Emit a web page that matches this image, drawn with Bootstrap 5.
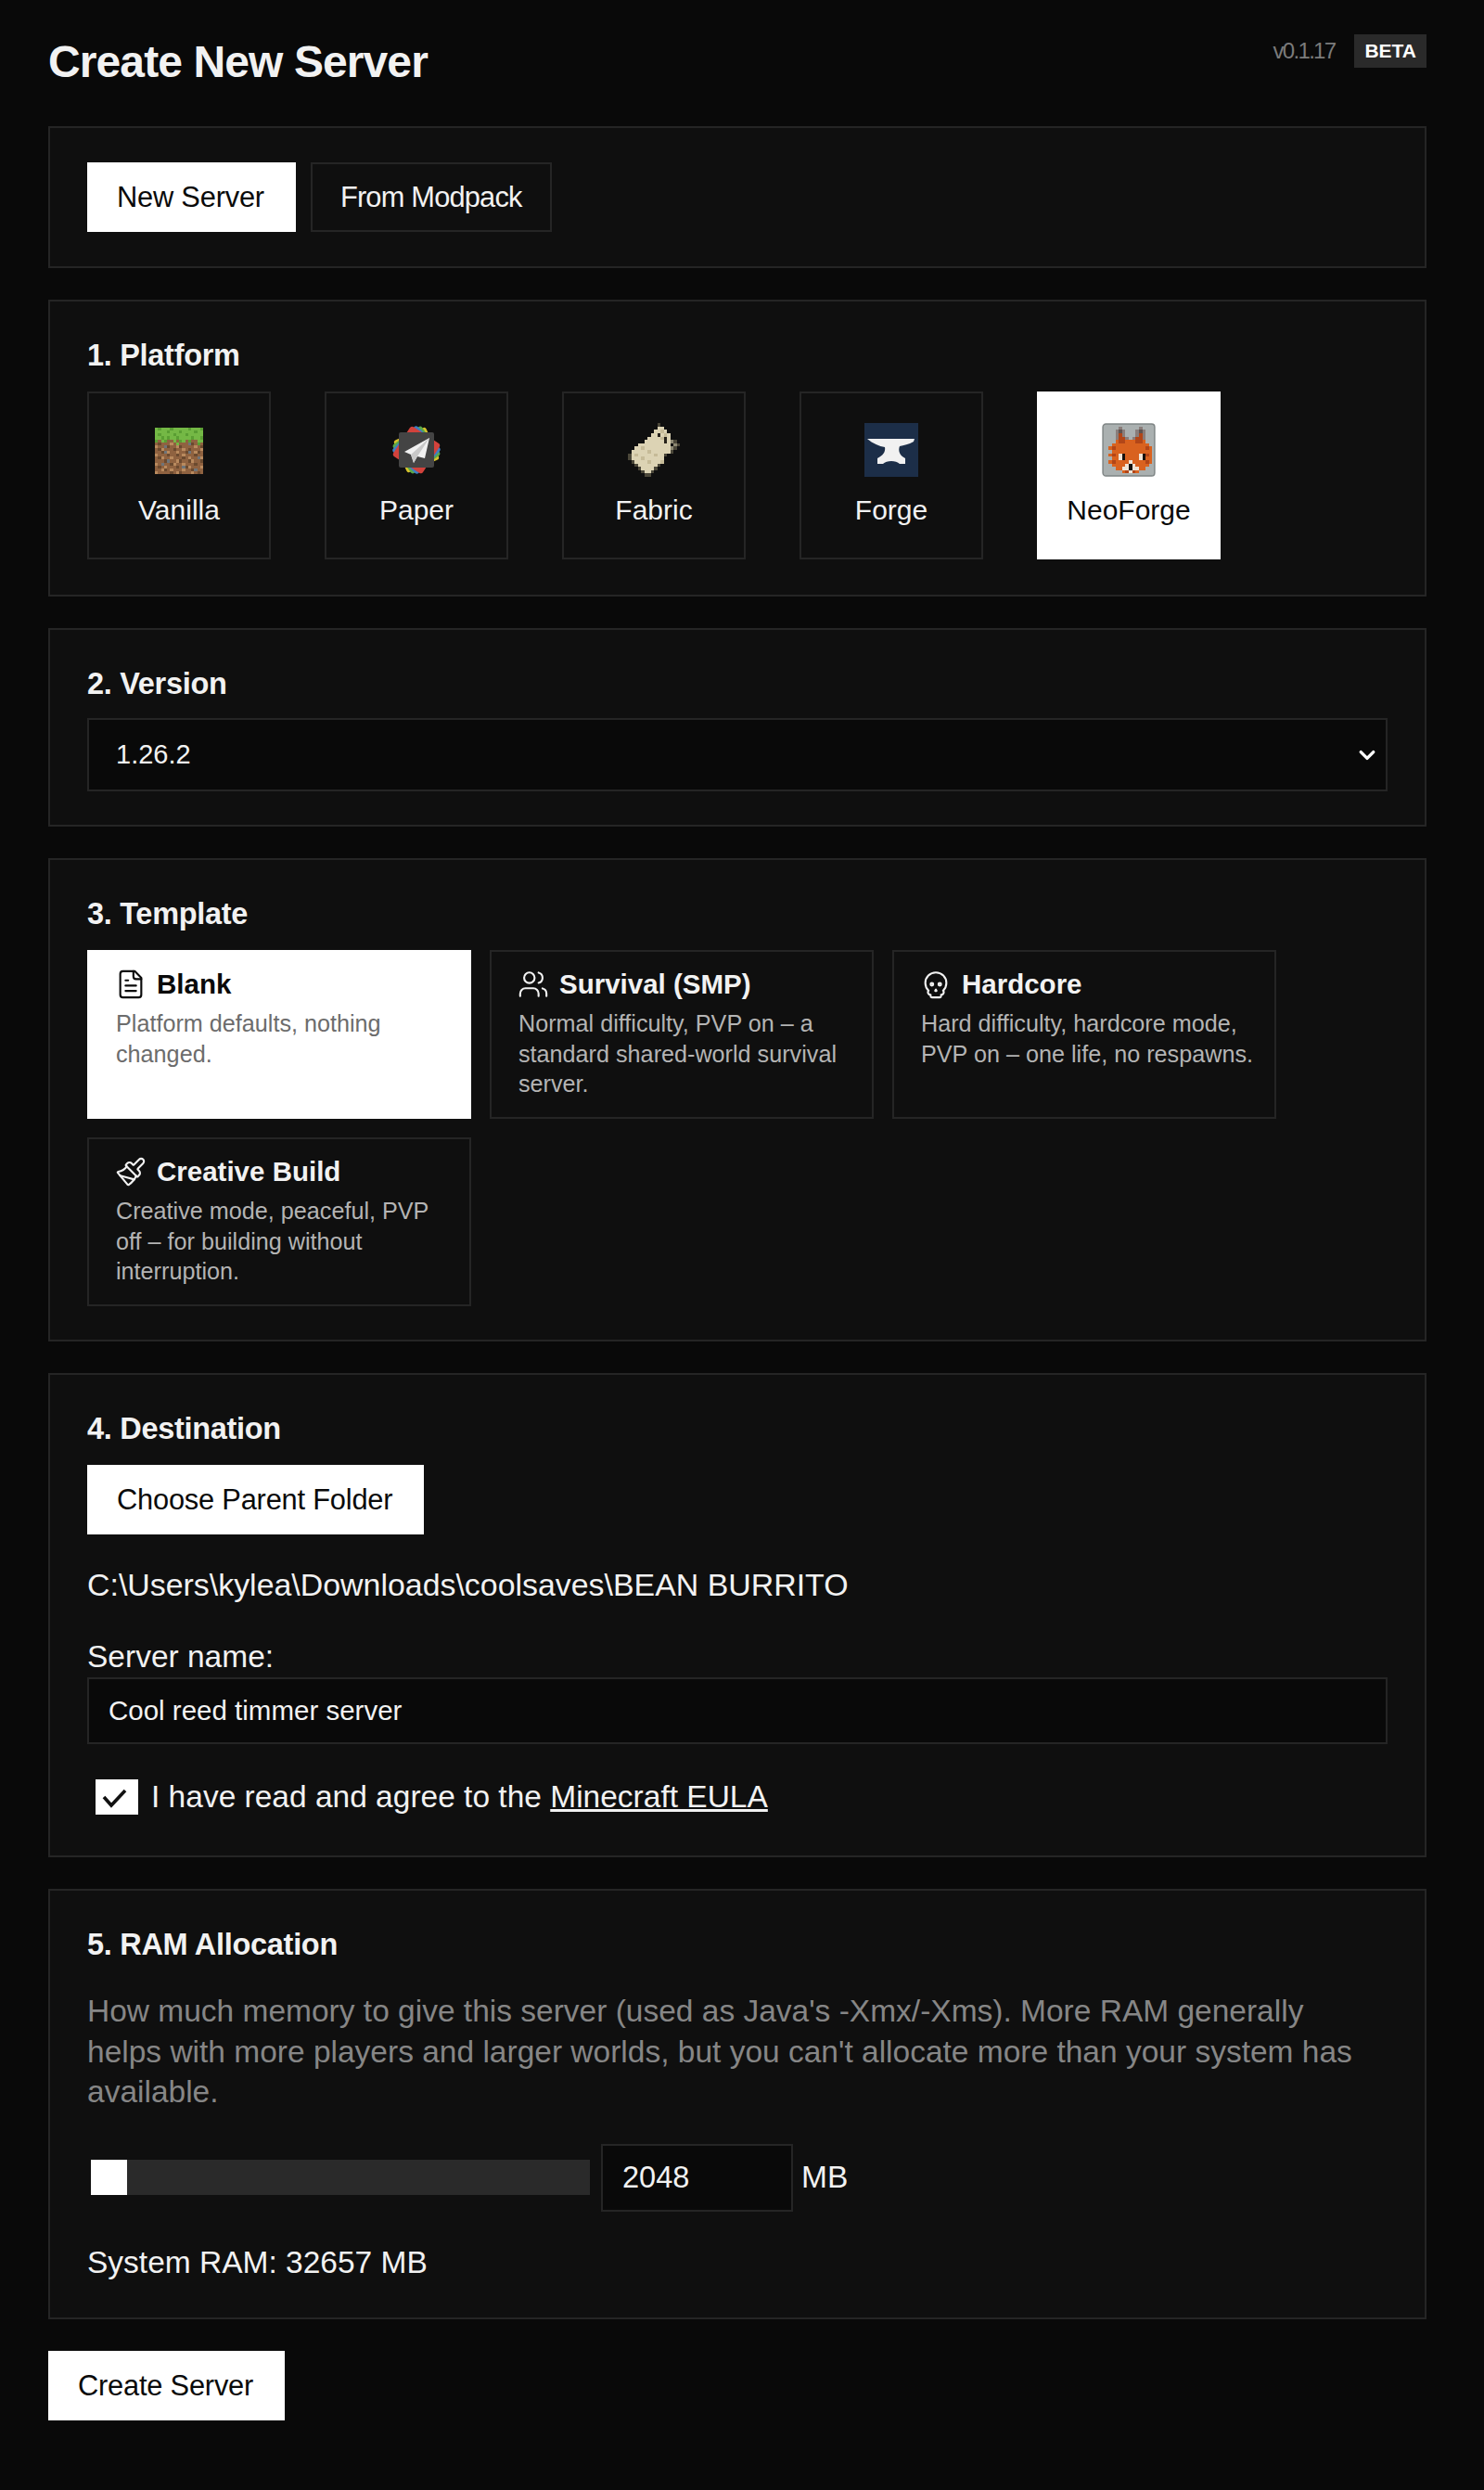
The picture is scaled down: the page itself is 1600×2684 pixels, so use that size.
<!DOCTYPE html>
<html lang="en">

<head>
    <meta charset="UTF-8">
    <meta name="viewport" content="width=device-width, initial-scale=1.0">
    <title>Create New Server</title>
    <link href="https://cdn.jsdelivr.net/npm/bootstrap@5.3.2/dist/css/bootstrap.min.css" rel="stylesheet">
    <style>
        body {
            font-family: "Liberation Sans", Arial, sans-serif;
            background-color: #090909;
            color: #f2f2f2;
            font-size: 33.5px;
            line-height: 44px;
        }

        .page {
            padding: 37px 62px 77px 52px;
        }

        .page-head {
            height: 99px;
        }

        .page-title {
            font-size: 48px;
            font-weight: 700;
            line-height: 60px;
            margin: 0;
            letter-spacing: -0.9px;
        }

        .version {
            color: #7b7b7b;
            font-size: 24px;
            line-height: 36px;
            letter-spacing: -1.7px;
            margin-right: 21px;
        }

        .beta {
            background-color: #2a2a2a;
            color: #fff;
            font-size: 21px;
            font-weight: 700;
            line-height: 36px;
            padding: 0 11px;
        }

        .panel {
            background-color: #0f0f0f;
            border: 2px solid #252525;
            padding: 37px 40px 38px;
            margin-bottom: 34px;
        }

        .panel-modes {
            padding-bottom: 37px;
        }

        .panel-select,
        .panel-templates {
            padding-bottom: 36px;
        }

        .panel-dest {
            padding-bottom: 41px;
        }

        .panel-ram {
            padding-bottom: 37px;
        }

        .panel-title {
            font-size: 32.5px;
            font-weight: 700;
            line-height: 42px;
            margin: 0 0 16px;
            letter-spacing: -0.3px;
        }

        .btn-flat {
            height: 75px;
            padding: 0 32px 0 30px;
            font-size: 30.8px;
            line-height: 71px;
            letter-spacing: -0.2px;
            border-radius: 0;
            border: 2px solid #252525;
            background-color: #0f0f0f;
            color: #f2f2f2;
        }

        .btn-flat.active {
            background-color: #fff;
            border-color: #fff;
            color: #0a0a0a;
        }

        .btn-modpack {
            padding: 0 30px;
            letter-spacing: -0.8px;
        }

        .btn-choose {
            margin-top: 18px;
        }

        .platform-grid {
            gap: 58px;
            margin-top: 18px;
        }

        .platform {
            width: 198px;
            height: 181px;
            border: 2px solid #252525;
            padding-top: 32px;
            font-size: 30px;
        }

        .platform.active,
        .template.active {
            background-color: #fff;
            border-color: #fff;
            color: #0a0a0a;
        }

        .platform svg {
            display: block;
            height: 58px;
            margin-bottom: 14px;
        }

        .platform svg.icon-block {
            height: 50px;
            margin-top: 5px;
            margin-bottom: 17px;
        }

        .version-select,
        .text-input {
            background-color: #090909;
            border: 2px solid #252525;
            border-radius: 0;
            color: #f2f2f2;
        }

        .version-select {
            height: 79px;
            padding: 0 60px 0 29px;
            font-size: 29px;
            background-image: url("data:image/svg+xml,%3csvg xmlns='http://www.w3.org/2000/svg' viewBox='0 0 16 16'%3e%3cpath fill='none' stroke='%23fff' stroke-linecap='round' stroke-linejoin='round' stroke-width='3' d='m2 5 6 6 6-6'/%3e%3c/svg%3e");
            background-position: right 8px center;
            background-size: 24px 18px;
        }

        .name-input {
            height: 72px;
            padding: 0 21px;
            font-size: 29.5px;
        }

        .template-grid {
            display: grid;
            grid-template-columns: repeat(3, 414px);
            gap: 20px;
            margin-top: 18px;
        }

        .template {
            height: 182px;
            border: 2px solid #252525;
            padding: 18px 20px 0 29px;
        }

        .template-name {
            font-size: 29.5px;
            font-weight: 700;
            line-height: 34px;
            margin-bottom: 9px;
            margin-left: -1px;
        }

        .template-name svg {
            width: 34px;
            height: 34px;
            flex-shrink: 0;
            margin-right: 11px;
        }

        .template-desc {
            color: #b4b4b4;
            font-size: 25.2px;
            line-height: 32.5px;
        }

        .template.active .template-desc {
            color: #6c6c6c;
        }

        .folder-path {
            font-size: 33.9px;
            margin-top: 32px;
            margin-bottom: 34px;
        }

        .eula {
            margin: 35px 0 0;
            padding: 0 0 0 9px;
        }

        .eula .form-check-input {
            width: 46px;
            height: 38px;
            margin: 0 14px 0 0;
            border: 0;
            border-radius: 0;
            background-color: #fff;
            background-image: url("data:image/svg+xml,%3csvg xmlns='http://www.w3.org/2000/svg' viewBox='0 0 46 38'%3e%3cpath fill='none' stroke='%23111' stroke-width='3.6' d='m9 19 8 9 15-16'/%3e%3c/svg%3e");
            background-size: 46px 38px;
        }

        .eula a {
            color: #f2f2f2;
        }

        .ram-help {
            color: #868686;
            line-height: 43.5px;
            margin: 29px 0 34px;
            max-width: 1385px;
        }

        .ram-range {
            width: 538px;
            height: 38px;
            margin-left: 4px;
            margin-right: 12px;
            -webkit-appearance: none;
            appearance: none;
            background: #2a2a2a;
        }

        .ram-range::-webkit-slider-runnable-track {
            height: 38px;
            background: transparent;
        }

        .ram-range::-webkit-slider-thumb {
            -webkit-appearance: none;
            appearance: none;
            width: 39px;
            height: 38px;
            margin: 0;
            border-radius: 0;
            background: #fff;
        }

        .ram-input {
            width: 207px;
            height: 73px;
            padding: 0 21px;
            margin-right: 9px;
            font-size: 32.6px;
        }

        .ram-total {
            margin-top: 33px;
        }

        .pix {
            shape-rendering: crispEdges;
        }
    </style>
</head>

<body>
    <main class="page">
        <header class="page-head d-flex justify-content-between align-items-start">
            <h1 class="page-title">Create New Server</h1>
            <div class="d-flex align-items-center">
                <span class="version">v0.1.17</span>
                <span class="beta">BETA</span>
            </div>
        </header>

        <section class="panel panel-modes">
            <div class="d-flex gap-3">
                <button type="button" class="btn btn-flat active">New Server</button>
                <button type="button" class="btn btn-flat btn-modpack">From Modpack</button>
            </div>
        </section>

        <section class="panel">
            <h2 class="panel-title">1. Platform</h2>
            <div class="platform-grid d-flex">
                <div class="platform text-center">
                    <svg class="pix icon-block mx-auto" id="icon-vanilla" width="52" viewBox="0 0 16 16" preserveAspectRatio="none"></svg>
                    Vanilla
                </div>
                <div class="platform text-center">
                    <svg class="mx-auto" width="58" viewBox="0 0 58 58">
                        <g transform="translate(29 29)">
                            <rect x="-19" y="-19" width="38" height="38" rx="3" fill="#d8c22c" transform="rotate(66)"/>
                            <rect x="-19" y="-19" width="38" height="38" rx="3" fill="#5aa84a" transform="rotate(55)"/>
                            <rect x="-19" y="-19" width="38" height="38" rx="3" fill="#3d7fc4" transform="rotate(44)"/>
                            <rect x="-19" y="-19" width="38" height="38" rx="3" fill="#d2423c" transform="rotate(33)"/>
                            <rect x="-19" y="-19" width="38" height="38" rx="2" fill="#444"/>
                            <path d="M14-13-13 2l7 3 3 9 4-7 8 2z" fill="#f1f1f1"/>
                            <path d="M14-13-6 5l3 9 4-7z" fill="#c9c9c9"/>
                        </g>
                    </svg>
                    Paper
                </div>
                <div class="platform text-center">
                    <svg class="pix mx-auto" id="icon-fabric" width="56" viewBox="0 0 16 16" preserveAspectRatio="none"></svg>
                    Fabric
                </div>
                <div class="platform text-center">
                    <svg class="mx-auto" width="58" viewBox="0 0 58 58">
                        <rect width="58" height="58" fill="#1c2e48"/>
                        <path d="M3 17H54L53 20C48 23 42 24 38 25C36 30 38 35 44 38V44H38C34 40 24 40 20 44H14V38C20 35 23 31 22 26C16 25 9 22 3 17Z" fill="#f1f1f1"/>
                    </svg>
                    Forge
                </div>
                <div class="platform active text-center">
                    <svg class="pix mx-auto" id="icon-neoforge" width="58" viewBox="0 0 16 16" preserveAspectRatio="none"></svg>
                    NeoForge
                </div>
            </div>
        </section>

        <section class="panel panel-select">
            <h2 class="panel-title">2. Version</h2>
            <select class="form-select version-select">
                <option selected>1.26.2</option>
                <option>1.26.1</option>
            </select>
        </section>

        <section class="panel panel-templates">
            <h2 class="panel-title">3. Template</h2>
            <div class="template-grid">
                <div class="template active">
                    <div class="template-name d-flex align-items-center">
                        <svg viewBox="0 0 24 24" fill="none" stroke="currentColor" stroke-width="1.5" stroke-linecap="round" stroke-linejoin="round">
                            <path d="M15 2H6a2 2 0 0 0-2 2v16a2 2 0 0 0 2 2h12a2 2 0 0 0 2-2V7Z"/>
                            <path d="M14 2v4a2 2 0 0 0 2 2h4"/>
                            <path d="M10 9H8"/>
                            <path d="M16 13H8"/>
                            <path d="M16 17H8"/>
                        </svg>
                        Blank
                    </div>
                    <div class="template-desc">Platform defaults, nothing changed.</div>
                </div>
                <div class="template">
                    <div class="template-name d-flex align-items-center">
                        <svg viewBox="0 0 24 24" fill="none" stroke="currentColor" stroke-width="1.5" stroke-linecap="round" stroke-linejoin="round">
                            <path d="M16 21v-2a4 4 0 0 0-4-4H6a4 4 0 0 0-4 4v2"/>
                            <circle cx="9" cy="7" r="4"/>
                            <path d="M22 21v-2a4 4 0 0 0-3-3.87"/>
                            <path d="M16 3.13a4 4 0 0 1 0 7.75"/>
                        </svg>
                        Survival (SMP)
                    </div>
                    <div class="template-desc">Normal difficulty, PVP on – a standard shared-world survival server.</div>
                </div>
                <div class="template">
                    <div class="template-name d-flex align-items-center">
                        <svg viewBox="0 0 24 24" fill="none" stroke="currentColor" stroke-width="1.5" stroke-linecap="round" stroke-linejoin="round">
                            <path d="m12.5 17-.5-1-.5 1h1z"/>
                            <path d="M15 22a1 1 0 0 0 1-1v-1a2 2 0 0 0 1.56-3.25 8 8 0 1 0-11.12 0A2 2 0 0 0 8 20v1a1 1 0 0 0 1 1z"/>
                            <circle cx="15" cy="12" r="1"/>
                            <circle cx="9" cy="12" r="1"/>
                        </svg>
                        Hardcore
                    </div>
                    <div class="template-desc">Hard difficulty, hardcore mode, PVP on – one life, no respawns.</div>
                </div>
                <div class="template">
                    <div class="template-name d-flex align-items-center">
                        <svg viewBox="0 0 24 24" fill="none" stroke="currentColor" stroke-width="1.5" stroke-linecap="round" stroke-linejoin="round">
                            <path d="m14.622 17.897-10.68-2.913"/>
                            <path d="M18.376 2.622a1 1 0 1 1 3.002 3.002L17.36 9.643a.5.5 0 0 0 0 .707l.944.944a2.41 2.41 0 0 1 0 3.408l-.944.944a.5.5 0 0 1-.707 0L8.354 7.348a.5.5 0 0 1 0-.707l.944-.944a2.41 2.41 0 0 1 3.408 0l.944.944a.5.5 0 0 0 .707 0z"/>
                            <path d="M9 8c-1.804 2.71-3.97 3.46-6.583 3.948a.507.507 0 0 0-.302.819l7.32 8.883a1 1 0 0 0 1.185.204C12.735 20.405 16 16.792 16 15"/>
                        </svg>
                        Creative Build
                    </div>
                    <div class="template-desc">Creative mode, peaceful, PVP off – for building without interruption.</div>
                </div>
            </div>
        </section>

        <section class="panel panel-dest">
            <h2 class="panel-title">4. Destination</h2>
            <button type="button" class="btn btn-flat btn-choose active d-block">Choose Parent Folder</button>
            <div class="folder-path">C:\Users\kylea\Downloads\coolsaves\BEAN BURRITO</div>
            <label for="server-name" class="d-block">Server name:</label>
            <input type="text" id="server-name" class="form-control text-input name-input" value="Cool reed timmer server">
            <div class="form-check eula d-flex align-items-center">
                <input class="form-check-input" type="checkbox" id="eula" checked>
                <label class="form-check-label" for="eula">I have read and agree to the <a href="#">Minecraft EULA</a></label>
            </div>
        </section>

        <section class="panel panel-ram">
            <h2 class="panel-title">5. RAM Allocation</h2>
            <p class="ram-help">How much memory to give this server (used as Java's -Xmx/-Xms). More RAM generally helps with more players and larger worlds, but you can't allocate more than your system has available.</p>
            <div class="d-flex align-items-center">
                <input type="range" class="ram-range" min="2048" max="32657" value="2048">
                <input type="number" class="form-control text-input ram-input" value="2048">
                <span>MB</span>
            </div>
            <div class="ram-total">System RAM: 32657 MB</div>
        </section>

        <button type="button" class="btn btn-flat active">Create Server</button>
    </main>

    <script>
        // pixel-art platform icons, one char = one pixel
        function drawPixels(id, rows, colors, backdrop) {
            const svg = document.getElementById(id);
            let out = backdrop || '';
            rows.forEach((row, y) => {
                [...row].forEach((c, x) => {
                    if (colors[c]) out += `<rect x="${x}" y="${y}" width="1.02" height="1.02" fill="${colors[c]}"/>`;
                });
            });
            svg.innerHTML = out;
        }

        drawPixels('icon-vanilla', [
            'gGgggGgggggGgggG',
            'ggggGgggGggggGgg',
            'gGggggGgggGggggg',
            'ggGgGggGggggGggG',
            'GdgGddgdGgdGddgg',
            'dsdddldgdddxsdGd',
            'lddxsddlsddddlds',
            'dsldddsddldsdddl',
            'ddsxlddlddsxdlsd',
            'ldddsddsdldddsdd',
            'dslddldddsdlddxl',
            'dddsxddlsddsldds',
            'ldxddslddldddsdd',
            'dsdldddsdxsldddl',
            'ddlsdldddlddsxdd',
            'lddddsdlsdddldsd'
        ], { g: '#74b845', G: '#5a9e33', d: '#8f6240', s: '#6b4a2f', l: '#b98a5e', x: '#6f7478' });

        drawPixels('icon-fabric', [
            '.........h......',
            '.........cc.....',
            '........ccbc....',
            '.......cckcbc...',
            '......ccccbkc...',
            '.....cccccckcnh.',
            '...cccccccccc.nh',
            '..ccbccccccccnh.',
            '.cccccbcccccch..',
            'hcbcccccbcch....',
            'hcccbcccccc.....',
            '.hccccbcccb.....',
            '..hcccccch......',
            '...hcccch.......',
            '....hcch........',
            '.....hh.........'
        ], { c: '#dcd3b4', b: '#c6bb98', k: '#26221b', n: '#8d8873', h: '#4b4739' });

        drawPixels('icon-neoforge', [
            '................',
            '.....g.....g....',
            '....gGg...gGg...',
            '....gOg...gOg...',
            '....gOOg.gOOg...',
            '....oOOoooOOo...',
            '...ooooooooooo..',
            '..oOoooooooooOo.',
            '...oooooooooooo.',
            '..oOowkoooowkOo.',
            '...oowkoooowkoo.',
            '..oOoooowooooOo.',
            '...oooowkwoooo..',
            '....oowwkwwoo...',
            '......oOwOo.....',
            '................'
        ], { g: '#8a7d7a', G: '#5e5350', o: '#d9621f', O: '#b24618', w: '#f1e3d4', k: '#16110e' },
            '<rect x=".3" y=".3" width="15.4" height="15.4" rx=".9" fill="#aab0b0" stroke="#7f8585" stroke-width=".4" shape-rendering="auto"/>');
    </script>

    <script src="https://cdn.jsdelivr.net/npm/bootstrap@5.3.2/dist/js/bootstrap.bundle.min.js"></script>
</body>

</html>
